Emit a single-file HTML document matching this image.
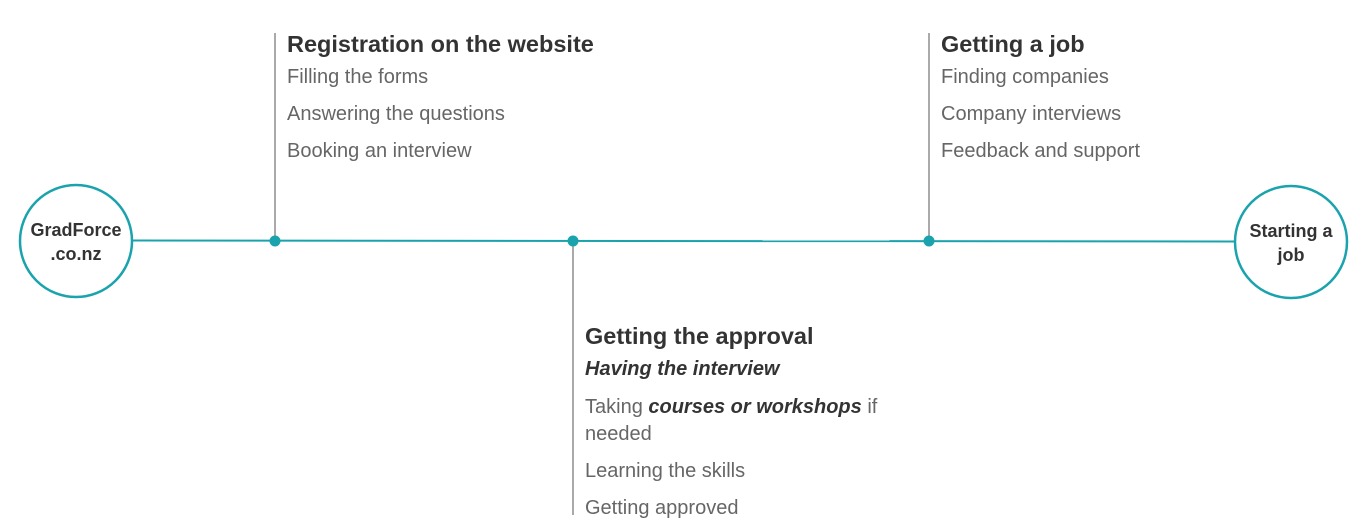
<!DOCTYPE html>
<html><head><meta charset="utf-8"><style>
body{margin:0;width:1367px;height:525px;background:#fff;position:relative;overflow:hidden;font-family:"Liberation Sans",sans-serif}
.t{position:absolute;white-space:nowrap;line-height:24px}
.h{font-weight:bold;font-size:23.5px;color:#333}
.i{font-size:20px;color:#666}
.c{position:absolute;font-weight:bold;font-size:18px;color:#333;text-align:center;line-height:24px;width:112px}
</style></head><body>
<svg width="1367" height="525" style="position:absolute;left:0;top:0">
<line x1="133" y1="240.5" x2="1235" y2="241.5" stroke="#1ba3ad" stroke-width="2"/>
<line x1="275" y1="33" x2="275" y2="241" stroke="#aaa" stroke-width="2"/>
<line x1="929" y1="33" x2="929" y2="241" stroke="#aaa" stroke-width="2"/>
<line x1="573" y1="241" x2="573" y2="515" stroke="#aaa" stroke-width="2"/>
<circle cx="76" cy="241" r="56" fill="#fff" stroke="#1ba3ad" stroke-width="2.5"/>
<circle cx="1291" cy="242" r="56" fill="#fff" stroke="#1ba3ad" stroke-width="2.5"/>
<circle cx="275" cy="241" r="5.5" fill="#1ba3ad"/>
<circle cx="573" cy="241" r="5.5" fill="#1ba3ad"/>
<circle cx="929" cy="241" r="5.5" fill="#1ba3ad"/>
</svg>
<div class="c" style="left:20px;top:218px">GradForce<br>.co.nz</div>
<div class="c" style="left:1235px;top:219px">Starting a<br>job</div>

<div class="t h" style="left:287px;top:32px">Registration on the website</div>
<div class="t i" style="left:287px;top:65px">Filling the forms</div>
<div class="t i" style="left:287px;top:102px">Answering the questions</div>
<div class="t i" style="left:287px;top:139px">Booking an interview</div>

<div class="t h" style="left:941px;top:32px">Getting a job</div>
<div class="t i" style="left:941px;top:65px">Finding companies</div>
<div class="t i" style="left:941px;top:102px">Company interviews</div>
<div class="t i" style="left:941px;top:139px">Feedback and support</div>

<div class="t h" style="left:585px;top:324px">Getting the approval</div>
<div class="t i" style="left:585px;top:357px;color:#333;font-weight:bold;font-style:italic">Having the interview</div>
<div class="t i" style="left:585px;top:395px">Taking <b style="color:#333;font-style:italic">courses or workshops</b> if</div>
<div class="t i" style="left:585px;top:422px">needed</div>
<div class="t i" style="left:585px;top:459px">Learning the skills</div>
<div class="t i" style="left:585px;top:496px">Getting approved</div>
</body></html>
